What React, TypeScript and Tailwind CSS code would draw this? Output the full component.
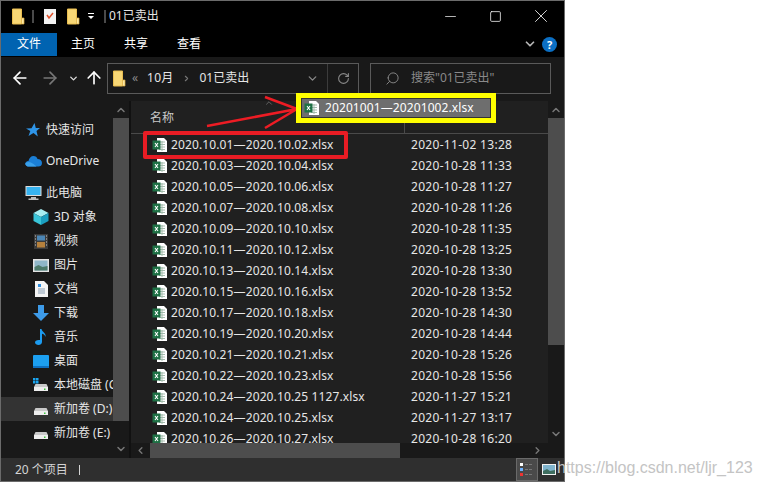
import React from 'react';
import { ArrowLeft, ArrowRight, ArrowUp, ChevronDown, ChevronUp, ChevronLeft, ChevronRight, RotateCw, Search, Minus, Square, X } from 'lucide-react';

const files = [
  ['2020.10.01—2020.10.02.xlsx', '2020-11-02 13:28'],
  ['2020.10.03—2020.10.04.xlsx', '2020-10-28 11:33'],
  ['2020.10.05—2020.10.06.xlsx', '2020-10-28 11:27'],
  ['2020.10.07—2020.10.08.xlsx', '2020-10-28 11:26'],
  ['2020.10.09—2020.10.10.xlsx', '2020-10-28 11:35'],
  ['2020.10.11—2020.10.12.xlsx', '2020-10-28 13:25'],
  ['2020.10.13—2020.10.14.xlsx', '2020-10-28 13:30'],
  ['2020.10.15—2020.10.16.xlsx', '2020-10-28 13:52'],
  ['2020.10.17—2020.10.18.xlsx', '2020-10-28 14:30'],
  ['2020.10.19—2020.10.20.xlsx', '2020-10-28 14:44'],
  ['2020.10.21—2020.10.21.xlsx', '2020-10-28 15:26'],
  ['2020.10.22—2020.10.23.xlsx', '2020-10-28 15:56'],
  ['2020.10.24—2020.10.25 1127.xlsx', '2020-11-27 15:21'],
  ['2020.10.24—2020.10.25.xlsx', '2020-11-27 13:17'],
  ['2020.10.26—2020.10.27.xlsx', '2020-10-28 16:20'],
];

const FolderIcon = () => (
  <svg width="14" height="17" viewBox="0 0 14 17" className="shrink-0">
    <path d="M1.500 1h9v15h-9z" fill="#f8d775" stroke="#e9bd50" />
    <path d="M10.500 10h2.500v6h-2.500z" fill="#fbe7a4" stroke="#e0b040" strokeWidth="0.700" />
  </svg>
);

const ExcelIcon = () => (
  <svg width="16" height="16" viewBox="0 0 16 16" className="shrink-0">
    <path d="M5 1h7l3 3v11H5z" fill="#fff" />
    <path d="M7 5h6M7 7.500h6M7 10h6M7 12.500h6M10 4v10" stroke="#9bb5a5" strokeWidth="0.900" />
    <rect x="0.500" y="3.500" width="8" height="9" fill="#1e7145" />
    <path d="M3 6l3 4M6 6l-3 4" stroke="#fff" strokeWidth="1.100" />
  </svg>
);

const Drive = ({ win }: { win?: boolean }) => (
  <svg width="16" height="16" viewBox="0 0 16 16" className="shrink-0">
    {win && <path d="M0 1h2.500v2.500H0zM3 1h2.500v2.500H3zM0 4h2.500v2.500H0zM3 4h2.500v2.500H3z" fill="#1aa5f0" />}
    <path d="M2.500 7h11l1.500 3H1z" fill="#c9c9c9" />
    <rect x="1" y="10" width="14" height="4" fill="#eee" />
    <rect x="11" y="11.500" width="1.500" height="1.500" fill="#3bc43b" />
  </svg>
);

const navIcons: Record<string, React.ReactNode> = {
  star: <svg width="16" height="16" viewBox="0 0 16 16"><path d="M9.500 1l1.300 5H15l-3.500 3 1.300 5.500L8.500 11 3.500 14l1.800-5L1 6.500l5.500-.3z" fill="#2f95e8" /></svg>,
  cloud: <svg width="17" height="12" viewBox="0 0 17 12"><path d="M4 11.500C1 11.500 0 9.500 .5 8 1 6.500 2.500 6 3.500 6 4 3 6 1 8.500 1c2 0 3.500 1 4 3 2.500 0 4.500 1.500 4.500 4s-1.500 3.500-3.500 3.500z" fill="#1b7fd6" /><path d="M4 11.500C1 11.500 0 9.500 .5 8c3-2 5-1 8 1l3 2.500z" fill="#3aa0ea" /></svg>,
  pc: <svg width="17" height="16" viewBox="0 0 17 16"><rect x="0.500" y="1" width="16" height="10" fill="#dcdcdc" /><rect x="1.500" y="2" width="14" height="8" fill="#37b3f0" /><path d="M6 12h5v1.500h2.500V15h-10v-1.500H6z" fill="#bdbdbd" /></svg>,
  cube: <svg width="16" height="16" viewBox="0 0 16 16"><path d="M8 0l7.500 4-7.500 4L.5 4z" fill="#a6eef2" /><path d="M.5 4L8 8v8l-7.500-4z" fill="#39c5d8" /><path d="M15.500 4L8 8v8l7.500-4z" fill="#1b9fc0" /></svg>,
  film: <svg width="14" height="15" viewBox="0 0 14 15"><rect width="14" height="15" fill="#3a3a3a" /><rect x="3" y="1.500" width="8" height="5" fill="#4b86b5" /><rect x="3" y="8" width="8" height="5.500" fill="#b5803c" /><path d="M1 2h1M1 5h1M1 8h1M1 11h1M12 2h1M12 5h1M12 8h1M12 11h1" stroke="#ccc" /></svg>,
  pic: <svg width="16" height="13" viewBox="0 0 16 13"><rect width="16" height="13" fill="#e4e4e4" /><rect x="1.500" y="1.500" width="13" height="10" fill="#8fb6c8" /><path d="M1.500 8l4-2 4 2 5-1v4.500h-13z" fill="#4d7a6a" /></svg>,
  doc: <svg width="13" height="16" viewBox="0 0 13 16"><path d="M0 0h9l4 4v12H0z" fill="#f4f4f4" /><path d="M3 3h3v3H3z" fill="#2f8fe0" /><path d="M3 8h7M3 10h7M3 12h7" stroke="#8aa0b5" /></svg>,
  down: <svg width="16" height="16" viewBox="0 0 16 16"><path d="M5 0h6v8h5l-8 8-8-8h5z" fill="#3d9be9" /></svg>,
  music: <svg width="12" height="16" viewBox="0 0 12 16"><path d="M5 0h1.500c.5 3 5 4 4 8-.5-2-2-3-3.500-3.300V13c0 2-1.800 3-3.500 3S0 15 0 13.300s2-2.800 5-2.300z" fill="#1c9cf0" /></svg>,
  desk: <svg width="16" height="13" viewBox="0 0 16 13"><rect width="16" height="13" rx="1" fill="#1c9ff0" /><path d="M0 11h16v2H0z" fill="#0d6fc0" /></svg>,
  c: <Drive win />,
  d: <Drive />,
};

const nav = [
  { icon: 'cube', label: '3D 对象' },
  { icon: 'film', label: '视频' },
  { icon: 'pic', label: '图片' },
  { icon: 'doc', label: '文档' },
  { icon: 'down', label: '下载' },
  { icon: 'music', label: '音乐' },
  { icon: 'desk', label: '桌面' },
  { icon: 'c', label: '本地磁盘 (C:)' },
  { icon: 'd', label: '新加卷 (D:)', active: true },
  { icon: 'd', label: '新加卷 (E:)' },
];

const App: React.FC = () => {
  return (
    <div className="relative flex h-[483px] w-[761px] overflow-hidden bg-white text-[12px] text-[#e6e6e6] [font-family:'Noto_Sans','Noto_Sans_CJK_SC',sans-serif]">
      <div className="flex h-[482px] w-[565px] flex-col border border-[#6b6b6b] bg-black">
        {/* title bar */}
        <div className="flex h-[30px] shrink-0 items-center">
          <div className="ml-[10px]"><FolderIcon /></div>
          <div className="ml-[7px] h-[13px] w-[2px] bg-[#4a4a4a]" />
          <div className="ml-[10px]">
            <svg width="12" height="16" viewBox="0 0 12 16"><path d="M0 1h12v15H0z" fill="#f2f2f2" /><path d="M3 7l2 3 4-5" stroke="#e0502a" strokeWidth="1.500" fill="none" /></svg>
          </div>
          <div className="ml-[10px]"><FolderIcon /></div>
          <div className="ml-[8px] flex flex-col items-center gap-[2px]"><div className="h-px w-[6px] bg-white" /><div className="h-0 w-0 border-x-[3px] border-t-[3px] border-x-transparent border-t-white" /></div>
          <div className="ml-[10px] h-[13px] w-[2px] bg-[#4a4a4a]" />
          <span className="ml-[3px]">01已卖出</span>
          <div className="ml-auto flex items-center">
            <Minus size={17} strokeWidth={1} className="mr-[30px] text-white" />
            <Square size={13} strokeWidth={1.400} className="mr-[28px] text-white" />
            <X size={22} strokeWidth={0.900} className="mr-[12px] text-white" />
          </div>
        </div>
        {/* ribbon tabs */}
        <div className="flex h-[26px] shrink-0 items-center">
          <div className="flex h-[23px] w-[56px] items-center justify-center bg-[#0063b1] text-white">文件</div>
          <span className="ml-[14px] text-white">主页</span>
          <span className="ml-[29px] text-white">共享</span>
          <span className="ml-[29px] text-white">查看</span>
          <ChevronDown size={14} strokeWidth={3} className="ml-auto mr-[5px] text-[#b5b5b5]" />
          <div className="mr-[7px] flex h-[15px] w-[15px] items-center justify-center rounded-full bg-[#0b6fc4] text-[11px] font-bold leading-none text-white">?</div>
        </div>
        {/* address row */}
        <div className="flex h-[44px] shrink-0 items-center bg-[#191919] pb-[2px]">
          <ArrowLeft size={20} strokeWidth={2} className="ml-[9px] text-white" />
          <ArrowRight size={20} strokeWidth={2} className="ml-[10px] text-[#777]" />
          <ChevronDown size={11} strokeWidth={3} className="ml-[8px] text-[#ddd]" />
          <ArrowUp size={20} strokeWidth={2} className="ml-[5px] text-white" />
          <div className="ml-[3px] flex h-[31px] w-[252px] items-center border border-[#5a5a5a]">
            <div className="ml-[4px]"><FolderIcon /></div>
            <span className="ml-[6px] text-[#8a8a8a]">«</span>
            <span className="ml-[9px] tracking-[0.2px]">10月</span>
            <ChevronRight size={9} strokeWidth={3} className="ml-[9px] text-[#777]" />
            <span className="ml-[8px]">01已卖出</span>
            <ChevronDown size={13} strokeWidth={2.500} className="ml-auto mr-[8px] text-[#888]" />
            <div className="flex h-full w-[31px] items-center justify-center border-l border-[#3c3c3c]">
              <RotateCw size={13} strokeWidth={2} className="text-[#888]" />
            </div>
          </div>
          <div className="ml-[11px] flex h-[31px] w-[181px] items-center border border-[#5a5a5a] pl-[14px] text-[#8a8a8a]">
            <Search size={15} strokeWidth={1.500} className="-scale-x-100 text-[#8a8a8a]" />
            <span className="ml-[11px]">搜索"01已卖出"</span>
          </div>
        </div>
        {/* body */}
        <div className="flex min-h-0 flex-1">
          {/* nav pane */}
          <div className="flex w-[112px] shrink-0 flex-col overflow-hidden bg-[#191919] pt-[17px]">
            <div className="flex h-6 items-center whitespace-nowrap pl-[24px]"><span className="mr-[5px] flex w-[16px] justify-center">{navIcons.star}</span><span>快速访问</span></div>
            <div className="mt-[7px] flex h-6 items-center whitespace-nowrap pl-[24px]"><span className="mr-[4px] flex w-[17px] justify-center">{navIcons.cloud}</span><span>OneDrive</span></div>
            <div className="mt-[8px] flex h-6 items-center whitespace-nowrap pl-[24px]"><span className="mr-[4px] flex w-[17px] justify-center">{navIcons.pc}</span><span>此电脑</span></div>
            {nav.map((n, i) => (
              <div key={i} className={`flex h-6 shrink-0 items-center whitespace-nowrap pl-[32px] ${n.active ? 'bg-[#333333]' : ''}`}>
                <span className="mr-[5px] flex w-[16px] shrink-0 justify-center">{navIcons[n.icon]}</span><span>{n.label}</span>
              </div>
            ))}
          </div>
          {/* nav scrollbar */}
          <div className="flex w-[16px] shrink-0 flex-col items-center bg-[#191919]">
            <div className="flex h-[17px] w-full shrink-0 items-center justify-center"><ChevronUp size={12} strokeWidth={3} className="text-[#777]" /></div>
            <div className="h-[303px] w-full bg-[#4d4d4d]" />
            <div className="flex-1" />
            <div className="flex h-[18px] w-full shrink-0 items-center justify-center"><ChevronDown size={12} strokeWidth={3} className="text-[#777]" /></div>
          </div>
          <div className="w-[2px] shrink-0 bg-[#111]" />
          {/* file pane */}
          <div className="flex min-w-0 flex-1 flex-col">
            <div className="flex min-h-0 flex-1">
              <div className="flex min-w-0 flex-1 flex-col bg-[#202020]">
                <div className="relative flex h-[33px] shrink-0 items-center border-b border-[#4a4a4a] pl-[19px] text-[#c8c8c8]">
                  <span className="w-[254px] leading-[19px]">名称</span>
                  <div className="h-[19px] w-px self-end bg-[#4a4a4a]" />
                  <ChevronUp size={10} strokeWidth={1.500} className="absolute left-[133px] top-[-3px] text-[#888]" />
                </div>
                <div className="min-h-0 flex-1 overflow-hidden">
                  {files.map(([name, date]) => (
                    <div key={name} className="flex h-[21px] items-center whitespace-nowrap pl-[21px]">
                      <ExcelIcon />
                      <span className="ml-[3px] w-[240px] tracking-[0.12px]">{name}</span>
                      <span className="tracking-[0.3px]">{date}</span>
                    </div>
                  ))}
                </div>
              </div>
              <div className="flex w-[16px] shrink-0 flex-col items-center bg-[#191919]">
                <div className="flex h-[17px] w-full shrink-0 items-center justify-center"><ChevronUp size={12} strokeWidth={3} className="text-[#777]" /></div>
                <div className="h-[227px] w-full bg-[#4d4d4d]" />
                <div className="flex-1" />
                <div className="flex h-[18px] w-full shrink-0 items-center justify-center"><ChevronDown size={12} strokeWidth={3} className="text-[#777]" /></div>
              </div>
            </div>
            <div className="flex h-[15px] shrink-0 items-center bg-[#191919]">
              <div className="flex w-[19px] justify-center"><ChevronLeft size={11} strokeWidth={3} className="text-[#777]" /></div>
              <div className="h-full w-[250px] bg-[#4d4d4d]" />
              <div className="flex-1" />
              <div className="mr-[21px] flex"><ChevronRight size={11} strokeWidth={3} className="text-[#777]" /></div>
            </div>
          </div>
        </div>
        {/* status bar */}
        <div className="flex h-[23px] shrink-0 items-center bg-[#2f2f2f] pl-[14px] text-[#d4d4d4]">
          <span>20 个项目</span>
          <div className="ml-[11px] h-[10px] w-px bg-[#d4d4d4]" />
          <div className="ml-auto flex h-[23px] w-[22px] items-center justify-center border border-[#6a6a6a] bg-[#4a4a4a]">
            <svg width="14" height="13" viewBox="0 0 14 13"><path d="M0 0h3v3H0z" fill="#fff" /><path d="M0 5h3v3H0z" fill="#6ab0ff" /><path d="M0 10h3v3H0z" fill="#e33" /><path d="M5 1.500h8M5 6.500h8M5 11.500h8" stroke="#777" strokeDasharray="3 1" /></svg>
          </div>
          <div className="ml-[4px] mr-[8px]">
            <svg width="14" height="11" viewBox="0 0 14 11"><rect width="14" height="11" fill="#f2f2f2" /><rect x="1" y="1" width="12" height="9" fill="#7fb3cc" /><path d="M1 7l4-2 3 2 5-1v4H1z" fill="#3f6e60" /></svg>
          </div>
        </div>
      </div>

      {/* annotation arrows */}
      <svg width="761" height="483" className="pointer-events-none absolute left-0 top-0">
        <path d="M207 126L297 109M265 97L297 109M265 128L297 109" stroke="#ed1c24" strokeWidth="2.500" fill="none" />
      </svg>
      {/* yellow highlight */}
      <div className="absolute left-[296px] top-[93px] flex h-[30px] w-[200px] items-center border-[5px] border-[#ffff00] bg-[#6e6e6e] pl-[3px] text-white shadow-[inset_0_0_0_1px_#333]">
        <ExcelIcon />
        <span className="ml-[5px] whitespace-nowrap tracking-[0.1px]">20201001—20201002.xlsx</span>
      </div>
      {/* red highlight */}
      <div className="absolute left-[143px] top-[131px] h-[28px] w-[205px] rounded-[2px] border-4 border-[#e81c24]" />
      {/* watermark */}
      <div className="absolute left-[557px] top-[456px] whitespace-nowrap text-[16px] text-[#c4c4c4] [font-family:'Liberation_Sans',sans-serif]">https://blog.csdn.net/ljr_123</div>
    </div>
  );
};

export default App;
